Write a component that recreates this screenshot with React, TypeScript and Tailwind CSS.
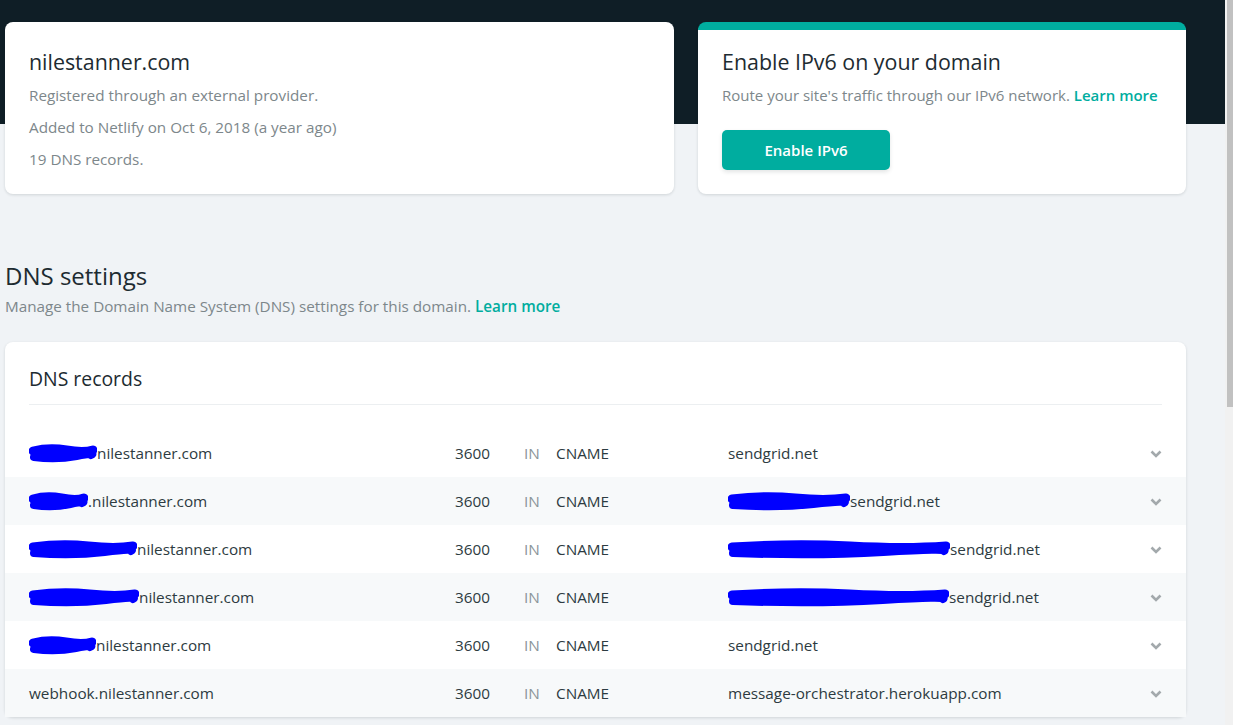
import React from "react";

const font = { fontFamily: '"Open Sans", "Noto Sans", Arial, sans-serif' };

type Rec = {
  name: string;
  nameBlob?: number;
  value: string;
  valueBlob?: number;
};

const records: Rec[] = [
  { name: "nilestanner.com", nameBlob: 68, value: "sendgrid.net" },
  { name: ".nilestanner.com", nameBlob: 59, value: "sendgrid.net", valueBlob: 122 },
  { name: "nilestanner.com", nameBlob: 108, value: "sendgrid.net", valueBlob: 222 },
  { name: "nilestanner.com", nameBlob: 110, value: "sendgrid.net", valueBlob: 221 },
  { name: "nilestanner.com", nameBlob: 67, value: "sendgrid.net" },
  { name: "webhook.nilestanner.com", value: "message-orchestrator.herokuapp.com" },
];

// scribbled-out redaction, as in the screenshot
function Blob({ w }: { w: number }) {
  return (
    <svg width={w} height={20} viewBox={`0 0 ${w} 20`} className="shrink-0 -my-1">
      <path
        d={`M4 7 Q ${w * 0.3} 3 ${w * 0.55} 6 T ${w - 4} 6`}
        stroke="#0000ff"
        strokeWidth={9}
        strokeLinecap="round"
        fill="none"
      />
      <path
        d={`M5 13 Q ${w * 0.4} 16 ${w * 0.7} 12 T ${w - 6} 11`}
        stroke="#0000ff"
        strokeWidth={8}
        strokeLinecap="round"
        fill="none"
      />
      <path d={`M${w * 0.15} 10 L ${w * 0.85} 9`} stroke="#0000ff" strokeWidth={6} strokeLinecap="round" />
    </svg>
  );
}

function Chevron() {
  return (
    <svg width="12" height="8" viewBox="0 0 12 8" className="text-[#a3a9ac]">
      <polyline points="1.5,1.5 6,6 10.5,1.5" fill="none" stroke="currentColor" strokeWidth="2.6" />
    </svg>
  );
}

function LearnMore() {
  return <a className="font-semibold text-[#00ad9f] cursor-pointer">Learn more</a>;
}

export default function App() {
  return (
    <div className="flex h-[725px] w-[1233px] overflow-hidden bg-[#f0f3f6]" style={font}>
      <main className="flex-1 pl-[5px] pt-[22px] bg-[linear-gradient(#0f1e26_124px,transparent_124px)]">
        <div className="w-[1181px]">
          {/* top cards */}
          <div className="flex gap-6">
            <section className="w-[669px] rounded-lg bg-white px-6 pt-6 pb-[23px] shadow-[0_1px_3px_rgba(14,30,37,0.14)]">
              <h2 className="text-[21.4px] leading-8 text-[#1d2b31]">nilestanner.com</h2>
              <p className="mt-[5px] text-[15.25px] leading-6 text-[#7d878b]">Registered through an external provider.</p>
              <p className="mt-2 text-[15.25px] leading-6 text-[#7d878b]">Added to Netlify on Oct 6, 2018 (a year ago)</p>
              <p className="mt-2 text-[15.25px] leading-6 text-[#7d878b]">19 DNS records.</p>
            </section>
            <section className="w-[488px] rounded-lg border-t-8 border-[#00ad9f] bg-white px-6 pt-4 pb-6 shadow-[0_1px_3px_rgba(14,30,37,0.14)]">
              <h2 className="text-[21.4px] leading-8 text-[#1d2b31]">Enable IPv6 on your domain</h2>
              <p className="mt-[5px] whitespace-nowrap text-[15px] leading-6 text-[#7d878b]">
                Route your site's traffic through our IPv6 network. <LearnMore />
              </p>
              <button className="mt-[23px] h-10 w-[168px] rounded-[5px] bg-[#00ad9f] text-[15px] font-semibold text-white shadow-[0_2px_4px_rgba(14,30,37,0.12)]">
                Enable IPv6
              </button>
            </section>
          </div>

          {/* DNS settings */}
          <div className="mt-[66px]">
            <h1 className="text-[24px] leading-8 text-[#1d2b31]">DNS settings</h1>
            <p className="mt-0.5 text-[15.25px] leading-6 text-[#7d878b]">
              Manage the Domain Name System (DNS) settings for this domain. <LearnMore />
            </p>
          </div>

          <section className="mt-6 rounded-lg bg-white pt-6 shadow-[0_1px_3px_rgba(14,30,37,0.14)]">
            <div className="mx-6 border-b border-[#eceff1] pb-3">
              <h2 className="text-[19.4px] leading-[26px] text-[#1d2b31]">DNS records</h2>
            </div>
            <div className="mt-6">
              {records.map((r, i) => (
                <div
                  key={i}
                  className={`grid h-12 grid-cols-[426px_69px_32px_172px_1fr_12px] items-center px-6 pt-px text-[15.3px] text-[#2d3b41] ${
                    i % 2 === 1 ? "bg-[#f7f9fa]" : "bg-white"
                  }`}
                >
                  <span className="flex items-center">
                    {r.nameBlob && <Blob w={r.nameBlob} />}
                    {r.name}
                  </span>
                  <span>3600</span>
                  <span className="text-[#8b9599]">IN</span>
                  <span>CNAME</span>
                  <span className="flex items-center">
                    {r.valueBlob && <Blob w={r.valueBlob} />}
                    {r.value}
                  </span>
                  <Chevron />
                </div>
              ))}
            </div>
          </section>
        </div>
      </main>

      {/* browser scrollbar */}
      <div className="w-[8px] bg-[#f1f1f1] pl-[2px]">
        <div className="h-[407px] bg-[#c1c1c1]" />
      </div>
    </div>
  );
}
